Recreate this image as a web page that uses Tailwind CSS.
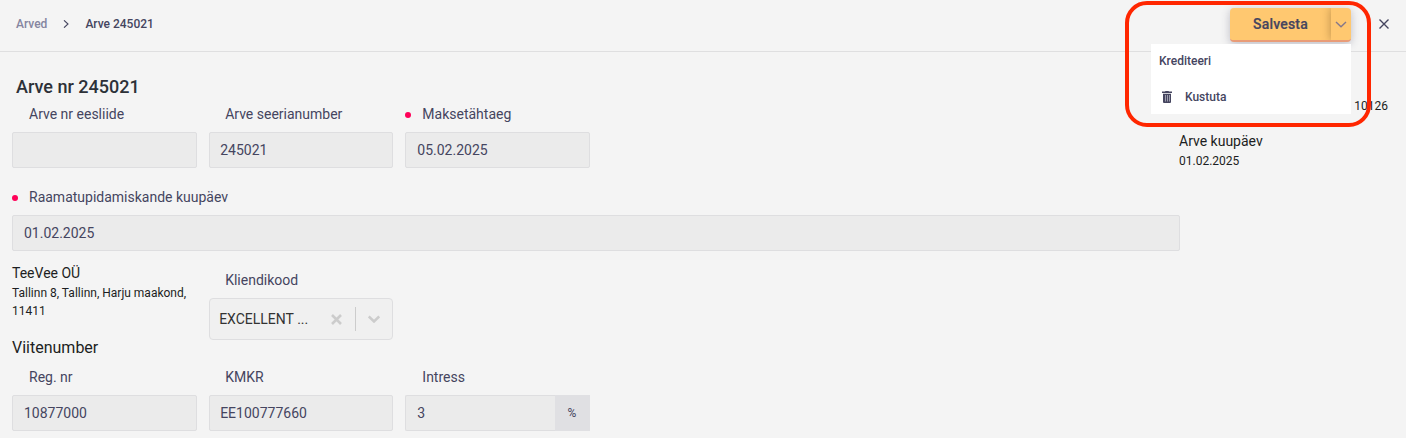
<!DOCTYPE html>
<html lang="et">
<head>
    <meta charset="UTF-8">
    <meta name="viewport" content="width=device-width, initial-scale=1.0">
    <title>Arve 245021</title>
    <script src="https://cdn.jsdelivr.net/npm/@tailwindcss/browser@4"></script>
</head>
<body class="relative h-[438px] overflow-hidden bg-[#f4f4f4] font-['Roboto','Liberation_Sans',sans-serif] text-sm text-[#45455f]">
    <!-- Header -->
    <header class="flex h-[52px] items-center justify-between border-b border-[#dfdfe0] pr-[17px] pb-px pl-4">
        <nav class="flex items-center pb-[3px] text-xs font-medium">
            <a href="#" class="text-[#8585a0]">Arved</a>
            <svg class="mx-[15px] mt-px h-2 w-2" viewBox="0 0 8 8" fill="none" stroke="#45455f" stroke-width="1.1"><path d="M2 .3 6 4 2 7.7"/></svg>
            <span>Arve 245021</span>
        </nav>
        <div class="flex items-center">
            <div class="relative">
                <div class="flex h-[34px] w-[121px] overflow-hidden rounded border-b-2 border-[#e99c78] bg-[#ffc870] shadow-[0_2px_8px_rgba(60,60,90,0.3)]">
                    <button class="w-[101px] text-sm font-medium tracking-[0.2px] [-webkit-text-stroke:0.2px_#45455f]">Salvesta</button>
                    <button class="flex w-5 items-center justify-center shadow-[-1px_0_8px_rgba(90,60,20,0.35)]">
                        <svg class="h-[7px] w-3" viewBox="0 0 12 7" fill="none" stroke="#85788a" stroke-width="1.4"><path d="m1 1 5 4.8L11 1"/></svg>
                    </button>
                </div>
                <!-- Dropdown -->
                <div class="absolute top-9 right-0 z-10 h-[70px] w-[200px] bg-white text-xs font-medium">
                    <a href="#" class="flex h-[34px] items-center pl-2">Krediteeri</a>
                    <a href="#" class="flex h-[38px] items-center pl-[11px]">
                        <svg class="mr-[13px] h-3 w-2.5" viewBox="0 0 10 12" fill="#45455f"><path d="M0 .5h3L3.5 0h3L7 .5h3V2H0zM1 2.800h8V11a1 1 0 0 1-1 1H2a1 1 0 0 1-1-1z"/><path d="M3.500 4v6.500M5.500 4v6.500M7.500 4v6.500" stroke="#b4b4c2" stroke-width=".8"/></svg>
                        Kustuta
                    </a>
                </div>
            </div>
            <button class="ml-7 pb-0.5" aria-label="Sulge">
                <svg class="block h-2.5 w-2.5" viewBox="0 0 10 10" fill="none" stroke="#45455f" stroke-width="1.4"><path d="m.5.5 9 9M9.500.5l-9 9"/></svg>
            </button>
        </div>
    </header>

    <!-- Invoice form -->
    <main class="flex pt-[23px] pl-3">
        <div class="w-[1168px] shrink-0">
            <h1 class="ml-1 text-lg leading-6 font-medium text-[#2d3138]">Arve nr 245021</h1>
            <div class="mt-1.5 grid grid-cols-6 gap-x-3 gap-y-5">
                <div>
                    <label class="block pl-[17px] leading-[18px]">Arve nr eesliide</label>
                    <div class="mt-[9px] h-9 rounded-xs border border-[#dedee0] bg-[#ebebeb]"></div>
                </div>
                <div>
                    <label class="block pl-[16.5px] leading-[18px]">Arve seerianumber</label>
                    <div class="mt-[9px] flex h-9 items-center rounded-xs border border-[#dedee0] bg-[#ebebeb] px-[10.5px]">245021</div>
                </div>
                <div>
                    <label class="flex items-center leading-[18px]"><span class="mt-px mr-[11px] h-1.5 w-1.5 rounded-full bg-[#ff0058]"></span>Maksetähtaeg</label>
                    <div class="mt-[9px] flex h-9 items-center rounded-xs border border-[#dedee0] bg-[#ebebeb] px-[11px]">05.02.2025</div>
                </div>
                <div class="col-span-6">
                    <label class="flex items-center leading-[18px]"><span class="mt-px mr-[11px] h-1.5 w-1.5 rounded-full bg-[#ff0058]"></span>Raamatupidamiskande kuupäev</label>
                    <div class="mt-[9px] flex h-9 items-center rounded-xs border border-[#dedee0] bg-[#ebebeb] px-[11px]">01.02.2025</div>
                </div>
            </div>

            <!-- Client -->
            <div class="mt-[13px] grid grid-cols-6 gap-x-3">
                <div class="text-[#1c1e22]">
                    <p class="leading-[18px]">TeeVee OÜ</p>
                    <p class="mt-0.5 text-xs leading-[18px]">Tallinn 8, Tallinn, Harju maakond, 11411</p>
                    <h2 class="mt-[18px] text-base leading-5">Viitenumber</h2>
                </div>
                <div class="pt-[7px]">
                    <label class="block pl-[16.5px] leading-[18px]">Kliendikood</label>
                    <div class="mt-[9px] flex h-[42px] items-center rounded border border-[#dedee0] bg-[#f0f0f0] pl-[9.5px]">
                        <span class="w-28 text-[#333]">EXCELLENT ...</span>
                        <svg class="h-[11px] w-[11px]" viewBox="0 0 11 11" fill="none" stroke="#ccc" stroke-width="2.6"><path d="m1 1 9 9M10 1 1 10"/></svg>
                        <span class="ml-[13px] h-6 w-px bg-[#ccc]"></span>
                        <svg class="ml-3 h-2 w-3" viewBox="0 0 12 8" fill="none" stroke="#ccc" stroke-width="2.5"><path d="m.8 1.500 5.200 5 5.200-5"/></svg>
                    </div>
                </div>
            </div>

            <div class="mt-2.5 grid grid-cols-6 gap-x-3">
                <div>
                    <label class="block pl-[17px] leading-[18px]">Reg. nr</label>
                    <div class="mt-[9px] flex h-9 items-center rounded-xs border border-[#dedee0] bg-[#ebebeb] px-[11px]">10877000</div>
                </div>
                <div>
                    <label class="block pl-[16.5px] leading-[18px]">KMKR</label>
                    <div class="mt-[9px] flex h-9 items-center rounded-xs border border-[#dedee0] bg-[#ebebeb] px-[10.5px]">EE100777660</div>
                </div>
                <div>
                    <label class="block pl-[17px] leading-[18px]">Intress</label>
                    <div class="mt-[9px] flex h-9">
                        <div class="flex flex-1 items-center rounded-l-xs border border-r-0 border-[#dedee0] bg-[#ebebeb] px-[11px]">3</div>
                        <div class="flex w-[35px] items-center justify-center bg-[#e0e0e3] pr-px text-xs">%</div>
                    </div>
                </div>
            </div>
        </div>

        <!-- Invoice details -->
        <aside class="-ml-px flex-1 pt-[22px] text-[#1c1e22]">
            <p class="pr-[18px] text-right text-xs leading-[18px]">10126</p>
            <p class="mt-[17px] leading-[18px]">Arve kuupäev</p>
            <p class="mt-0.5 text-xs leading-[18px]">01.02.2025</p>
        </aside>
    </main>

    <!-- Highlight frame -->
    <div class="absolute top-px left-[1125px] z-20 h-[126px] w-[246px] rounded-[22px] border-4 border-[#ff2600]"></div>
</body>
</html>
